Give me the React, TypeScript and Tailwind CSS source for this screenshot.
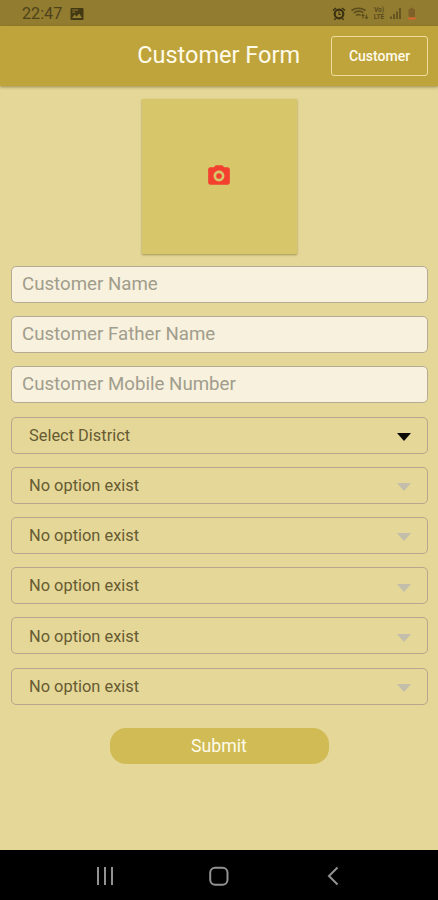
import React from "react";

const inputs = ["Customer Name", "Customer Father Name", "Customer Mobile Number"];

const selects = [
  { label: "Select District", enabled: true },
  { label: "No option exist", enabled: false },
  { label: "No option exist", enabled: false },
  { label: "No option exist", enabled: false },
  { label: "No option exist", enabled: false },
  { label: "No option exist", enabled: false },
];

function StatusBar() {
  return (
    <div className="flex h-[26px] shrink-0 items-center justify-between bg-[#927c2f] pl-[22px] pr-[20px] pt-[2px] text-[#4f431c]">
      <div className="flex items-center gap-[8px]">
        <span className="text-[16.2px] leading-none">22:47</span>
        <svg width="14" height="12" viewBox="0 0 14 12">
          <rect x="0.5" width="13" height="12" rx="1" fill="#443915" />
          <path d="M2.2 2h6M2.2 4.2h3" stroke="#927c2f" strokeWidth="1" />
          <path d="M2 10l2.7-3.5 2 2L9.300 5.500 12 10z" fill="#927c2f" />
        </svg>
      </div>
      <div className="flex items-center">
        <svg width="39" height="14" viewBox="332 7 39 14" fill="none">
          <g stroke="#3b3112">
            <circle cx="339" cy="14" r="4.300" strokeWidth="2.200" />
            <path d="M333 10.500l3-2.500M345 10.500l-3-2.500M335.500 18.500l-1 1.300M342.500 18.500l1 1.300" strokeWidth="1.600" />
            <path d="M339 11.500v3h2" strokeWidth="1.100" />
          </g>
          <g stroke="#5b4c1e" strokeWidth="1.500">
            <path d="M351.500 10.500q7-4.500 14 0M353.700 13q5-3.500 9.600-.5M356 15.500q2.500-1.800 4.600-.2" />
            <path d="M363 18.500v-4M361.600 16l1.400-1.600 1.400 1.600M366.500 14.500v4M365.100 17l1.400 1.600 1.400-1.600" strokeWidth="1.100" />
          </g>
        </svg>
        <div className="ml-[2px] flex w-[12px] flex-col items-center text-[6.5px] font-bold leading-[7px] text-[#5b4c1e]">
          <span>Vo)</span>
          <span>LTE</span>
        </div>
        <svg width="28" height="14" viewBox="390 7 28 14" className="ml-[5px]">
          <path d="M391 16.500V19M394 14V19M397 11.500V19M400 8V19" stroke="#5b4c1e" strokeWidth="1.600" />
          <rect x="408.500" y="9" width="6.500" height="8" rx="1.200" fill="#7d6128" />
          <rect x="410.300" y="7.800" width="3" height="1.500" fill="#7d6128" />
          <rect x="408.200" y="17.500" width="7.500" height="2" rx="0.500" fill="#d9622f" />
        </svg>
      </div>
    </div>
  );
}

function Header() {
  return (
    <header className="z-10 flex h-[60px] shrink-0 items-center justify-end bg-[#bfa43c] pr-[10px] shadow-[0_1px_3px_rgba(90,75,20,0.55)]">
      <h1 className="mr-[31px] whitespace-nowrap text-[23.5px] leading-none text-[#fffbe9]">
        Customer Form
      </h1>
      <button className="h-[40px] w-[97px] rounded-[3px] border border-[#eddc9b] text-[14px] font-medium text-[#fffbe9]">
        Customer
      </button>
    </header>
  );
}

function NavBar() {
  return (
    <nav className="flex h-[50px] shrink-0 items-center bg-black px-[96px] pt-[2px]">
      <svg width="246" height="24" viewBox="96 864 246 24" fill="none" stroke="#929292">
        <path d="M98 867v18M105 867v18M112 867v18" strokeWidth="2" />
        <rect x="210.200" y="867.700" width="17.300" height="17" rx="5" strokeWidth="2" />
        <path d="M337.500 867.500l-8.500 8.500 8.500 8.500" strokeWidth="2" />
      </svg>
    </nav>
  );
}

export default function App() {
  return (
    <div className="flex h-[900px] w-[438px] flex-col overflow-hidden bg-[#e4d797] font-['Roboto',sans-serif]">
      <StatusBar />
      <Header />
      <main className="flex flex-1 flex-col items-center pl-[11px] pr-[10px] pt-[13px]">
        <div className="flex size-[155px] shrink-0 items-center justify-center bg-[#d8c66b] shadow-[0_1px_2px_rgba(110,95,35,0.55)]">
          <svg width="26" height="26" viewBox="0 0 24 24" fill="#f4402f" className="mb-[2px] mr-px">
            <circle cx="12" cy="12" r="2.600" />
            <path d="M9 2L7.170 4H4c-1.100 0-2 .9-2 2v12c0 1.100.9 2 2 2h16c1.100 0 2-.9 2-2V6c0-1.100-.9-2-2-2h-3.170L15 2H9zm3 15c-2.760 0-5-2.240-5-5s2.240-5 5-5 5 2.240 5 5-2.240 5-5 5z" />
          </svg>
        </div>
        <form className="mt-[12px] flex w-full flex-col gap-[13.2px]">
          {inputs.map((placeholder) => (
            <input
              key={placeholder}
              placeholder={placeholder}
              className="h-[37px] w-full rounded-[5px] border border-[#b5aa94] bg-[#f7f1de] px-[10px] pb-[2px] text-[18.7px] placeholder:text-[#a19d8c]"
            />
          ))}
          {selects.map((item, i) => (
            <button
              key={i}
              type="button"
              className="flex h-[37px] w-full items-center justify-between rounded-[5px] border border-[#b5a68c] pl-[17px] pr-[16px] text-[16.4px] text-[#675b33]"
            >
              <span className="pt-[2px]">{item.label}</span>
              <svg width="14" height="8" viewBox="0 0 14 8" className="mt-[4px]">
                <path d="M0 0h14L7 8z" fill={item.enabled ? "#0b0a05" : "#c3bdab"} />
              </svg>
            </button>
          ))}
        </form>
        <button className="mr-px mt-[23px] h-[36px] w-[219px] rounded-[16px] bg-[#d0bb55] pt-[2px] text-[17.7px] text-[#fffbe9]">
          Submit
        </button>
      </main>
      <NavBar />
    </div>
  );
}
